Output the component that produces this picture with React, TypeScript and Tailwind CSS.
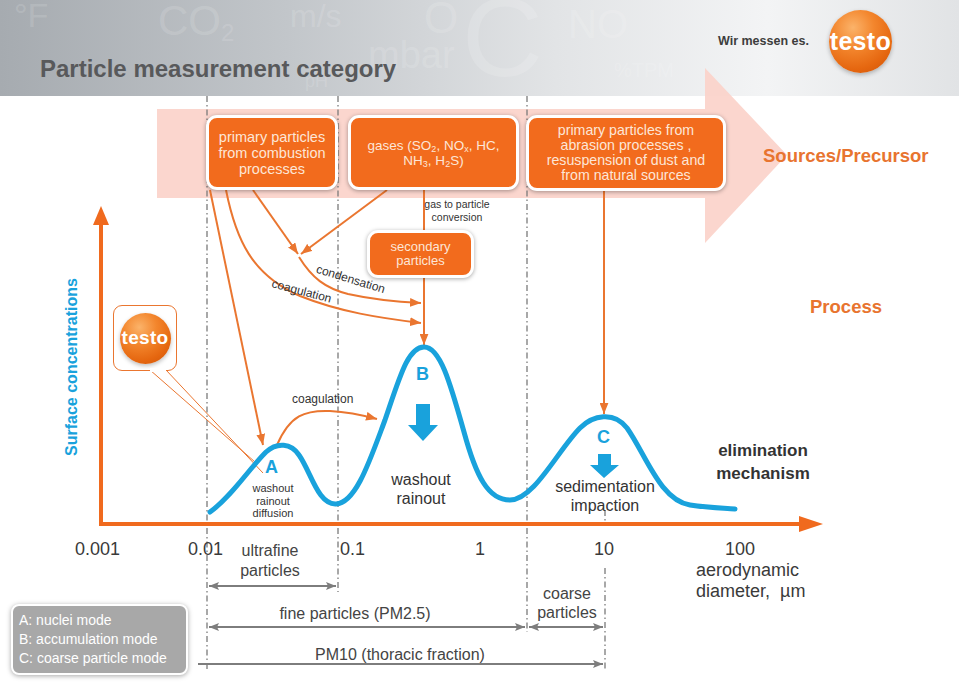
import React from 'react'

const ORANGE = '#ea7630'

// faint unit symbols behind the title bar
const ghostText = [
  { t: '°F', cls: 'left-[14px] top-[-2px] text-[34px]' },
  { t: 'm/s', cls: 'left-[290px] top-[0px] text-[32px]' },
  { t: 'O', cls: 'left-[424px] top-[-4px] text-[44px]' },
  { t: 'C', cls: 'left-[462px] top-[-18px] text-[112px]' },
  { t: 'NO', cls: 'left-[568px] top-[4px] text-[40px]' },
  { t: 'mbar', cls: 'left-[368px] top-[36px] text-[38px]' },
  { t: 'pH', cls: 'left-[305px] top-[72px] text-[18px]' },
  { t: '%TPM', cls: 'left-[614px] top-[60px] text-[20px]' },
]

function TestoBall({ size, text }: { size: string; text: string }) {
  return (
    <div
      className={`${size} flex items-center justify-center rounded-full bg-[radial-gradient(circle_at_38%_28%,#fbb36a_0%,#f3862d_35%,#e5660f_70%,#c9520a_100%)] shadow-[0_2px_4px_rgba(0,0,0,0.25)]`}
    >
      <span className={`${text} font-bold tracking-[0.3px] text-white`}>testo</span>
    </div>
  )
}

function SourceBox({ cls, children }: { cls: string; children: React.ReactNode }) {
  return (
    <div
      className={`absolute flex items-center justify-center rounded-[11px] border-[3px] border-white bg-[#f26b1d] text-center text-[#fde6d7] shadow-[0_1px_4px_rgba(0,0,0,0.35)] ${cls}`}
    >
      {children}
    </div>
  )
}

function Diagram() {
  return (
    <svg className="absolute left-0 top-0" width="959" height="687" viewBox="0 0 959 687">
      <defs>
        <marker id="oa" viewBox="0 0 10 8" refX="10" refY="4" markerWidth="11" markerHeight="9" markerUnits="userSpaceOnUse" orient="auto">
          <path d="M0,0 L10,4 L0,8 z" fill={ORANGE} />
        </marker>
        <marker id="ga" viewBox="0 0 10 8" refX="10" refY="4" markerWidth="10" markerHeight="9" markerUnits="userSpaceOnUse" orient="auto-start-reverse">
          <path d="M0,0 L10,4 L0,8 L2,4 z" fill="#7d7d7d" />
        </marker>
      </defs>

      {/* sources band */}
      <path d="M157,109 L705,109 L705,68 L787,155 L705,243 L705,198 L157,198 z" fill="#fbd2ca" opacity="0.92" />

      {/* dash-dot size boundaries */}
      <g stroke="#7a7a7a" strokeWidth="1.3" strokeDasharray="6 3 1.5 3" fill="none">
        <line x1="207" y1="96" x2="207" y2="670" />
        <line x1="338" y1="96" x2="338" y2="592" />
        <line x1="527" y1="96" x2="527" y2="632" />
        <line x1="605" y1="568" x2="605" y2="670" />
        <line x1="605" y1="510" x2="605" y2="524" />
      </g>

      {/* axes */}
      <line x1="101" y1="526" x2="101" y2="220" stroke="#f06a1e" strokeWidth="4" />
      <polygon points="101,206 93,225 109,225" fill="#f06a1e" />
      <line x1="99" y1="524" x2="802" y2="524" stroke="#f06a1e" strokeWidth="4" />
      <polygon points="823,524 799,516 799,532" fill="#f06a1e" />

      {/* process arrows */}
      <g stroke={ORANGE} strokeWidth="2" fill="none">
        <path d="M210,190 L263,445" markerEnd="url(#oa)" />
        <path d="M226,190 C236,240 252,275 300,296 C340,312 380,318 421,323" markerEnd="url(#oa)" />
        <path d="M253,190 L298,254" markerEnd="url(#oa)" />
        <path d="M387,190 L301,254" markerEnd="url(#oa)" />
        <path d="M299,257 C312,278 325,288 348,294 C375,300 400,302 421,303" markerEnd="url(#oa)" />
        <path d="M424,190 L424,231" />
        <path d="M424,277 L424,345" markerEnd="url(#oa)" />
        <path d="M604,191 L604,414" markerEnd="url(#oa)" />
        <path d="M277,445 C290,415 305,410 330,411 C348,412 362,415 377,419" markerEnd="url(#oa)" />
      </g>

      {/* callout tail */}
      <g stroke={ORANGE} strokeWidth="1" fill="none">
        <line x1="150" y1="370" x2="255" y2="462" />
        <line x1="166" y1="370" x2="263" y2="473" />
      </g>

      {/* size distribution */}
      <path
        d="M210,512 C232,496 248,470 266,452 C277,442 291,443 299,455 C311,472 318,505 336,504 C356,503 370,460 385,420 C400,376 408,347 424,347 C440,347 450,382 464,432 C476,476 488,500 510,500 C534,500 558,450 580,428 C593,415 614,411 627,428 C646,455 660,500 690,505 C710,508 724,508 735,509"
        stroke="#19a2dc"
        strokeWidth="5"
        fill="none"
        strokeLinecap="round"
      />
      <polygon points="416,404 430,404 430,425 438,425 423,441 408,425 416,425" fill="#19a2dc" />
      <polygon points="598,454 611,454 611,465 619,465 604,478 590,465 598,465" fill="#19a2dc" />

      {/* size class arrows */}
      <g stroke="#7d7d7d" strokeWidth="2" fill="none">
        <line x1="209" y1="586" x2="336" y2="586" markerStart="url(#ga)" markerEnd="url(#ga)" />
        <line x1="209" y1="627" x2="525" y2="627" markerStart="url(#ga)" markerEnd="url(#ga)" />
        <line x1="529" y1="627" x2="603" y2="627" markerStart="url(#ga)" markerEnd="url(#ga)" />
        <line x1="198" y1="664" x2="603" y2="664" markerEnd="url(#ga)" />
      </g>
    </svg>
  )
}

export default function App() {
  return (
    <div className="relative h-[687px] w-[959px] overflow-hidden bg-white font-['Liberation_Sans',Arial,sans-serif] text-[#3c3c3c]">
      <header className="relative h-[96px] overflow-hidden bg-[linear-gradient(90deg,#a6abb0_0%,#c2c6ca_30%,#e2e4e6_58%,#f3f4f5_80%,#e1e3e5_100%)]">
        {ghostText.map((g) => (
          <span key={g.t} className={`absolute leading-none text-white/15 ${g.cls}`}>
            {g.t}
          </span>
        ))}
        <span className="absolute left-[158px] top-[0px] text-[42px] leading-none text-white/15">
          CO<sub className="text-[24px]">2</sub>
        </span>
        <h1 className="absolute left-[40px] top-[51px] text-[24px] font-bold text-[#58595b]">
          Particle measurement category
        </h1>
      </header>

      <Diagram />

      {/* brand */}
      <div className="absolute left-[718px] top-[10px] flex items-center gap-[20px]">
        <span className="text-[12.5px] font-bold text-[#3d3d3d]">Wir messen es.</span>
        <TestoBall size="h-[63px] w-[63px]" text="text-[25px]" />
      </div>

      <SourceBox cls="left-[206px] top-[115px] h-[75px] w-[132px] text-[14.5px] leading-[16px]">
        primary particles
        <br />
        from combustion
        <br />
        processes
      </SourceBox>
      <SourceBox cls="left-[348px] top-[115px] h-[75px] w-[171px] text-[13.5px] leading-[15px]">
        <span>
          gases (SO<sub className="text-[9px]">2</sub>, NO<sub className="text-[9px]">x</sub>, HC,
          <br />
          NH<sub className="text-[9px]">3</sub>, H<sub className="text-[9px]">2</sub>S)
        </span>
      </SourceBox>
      <SourceBox cls="left-[526px] top-[115px] h-[76px] w-[200px] text-[14.2px] leading-[15px]">
        primary particles from
        <br />
        abrasion processes ,
        <br />
        resuspension of dust and
        <br />
        from natural sources
      </SourceBox>
      <SourceBox cls="left-[367px] top-[230px] h-[48px] w-[107px] text-[13px] leading-[14px]">
        secondary
        <br />
        particles
      </SourceBox>

      <div className="absolute left-[420px] top-[198px] w-[74px] text-center text-[10.5px] leading-[13px] text-[#333]">
        gas to particle
        <br />
        conversion
      </div>

      <div className="absolute left-[763px] top-[142px] text-[18.5px] font-bold text-[#e8742f]">
        Sources/Precursor
      </div>
      <div className="absolute left-[810px] top-[293px] text-[18.5px] font-bold text-[#e8742f]">Process</div>

      <div className="absolute left-[315px] top-[270px] rotate-[17deg] text-[12px] text-[#333]">condensation</div>
      <div className="absolute left-[271px] top-[282px] rotate-[15deg] text-[12px] text-[#333]">coagulation</div>
      <div className="absolute left-[292px] top-[390px] text-[12px] text-[#333]">coagulation</div>

      {/* callout */}
      <div className="absolute left-[113px] top-[305px] flex h-[66px] w-[64px] items-center justify-center rounded-[9px] border border-[#ea7630] bg-white">
        <TestoBall size="h-[51px] w-[51px]" text="text-[19px]" />
      </div>
      <div className="absolute left-[150px] top-[368px] h-[4px] w-[16px] bg-white" />

      <div className="absolute left-[-28px] top-[355px] w-[200px] -rotate-90 text-center text-[16px] font-bold text-[#19a2dc]">
        Surface concentrations
      </div>

      {/* modes */}
      <div className="absolute left-[265px] top-[454px] text-[18px] font-bold text-[#19a2dc]">A</div>
      <div className="absolute left-[416px] top-[361px] text-[18px] font-bold text-[#19a2dc]">B</div>
      <div className="absolute left-[597px] top-[424px] text-[18px] font-bold text-[#19a2dc]">C</div>

      <div className="absolute left-[243px] top-[482px] w-[60px] text-center text-[11px] leading-[12.5px] text-[#333]">
        washout
        <br />
        rainout
        <br />
        diffusion
      </div>
      <div className="absolute left-[376px] top-[470px] w-[90px] text-center text-[16px] leading-[19px] text-[#333]">
        washout
        <br />
        rainout
      </div>
      <div className="absolute left-[540px] top-[477px] w-[130px] text-center text-[16px] leading-[19px] text-[#333]">
        sedimentation
        <br />
        impaction
      </div>
      <div className="absolute left-[698px] top-[439px] w-[130px] text-center text-[17px] font-bold leading-[23px] text-[#333]">
        elimination
        <br />
        mechanism
      </div>

      {/* diameter scale */}
      <div className="absolute left-[75px] top-[536px] text-[18px] text-[#3a3a3a]">0.001</div>
      <div className="absolute left-[188px] top-[536px] text-[18px] text-[#3a3a3a]">0.01</div>
      <div className="absolute left-[340px] top-[536px] text-[18px] text-[#3a3a3a]">0.1</div>
      <div className="absolute left-[475px] top-[536px] text-[18px] text-[#3a3a3a]">1</div>
      <div className="absolute left-[594px] top-[536px] text-[18px] text-[#3a3a3a]">10</div>
      <div className="absolute left-[725px] top-[536px] text-[18px] text-[#3a3a3a]">100</div>
      <div className="absolute left-[696px] top-[560px] text-[18px] leading-[21px] text-[#3a3a3a]">
        aerodynamic
        <br />
        diameter,&nbsp; µm
      </div>

      <div className="absolute left-[224px] top-[541px] w-[92px] text-center text-[16px] leading-[20px] text-[#444]">
        ultrafine
        <br />
        particles
      </div>
      <div className="absolute left-[255px] top-[602px] w-[200px] text-center text-[16px] text-[#444]">
        fine particles (PM2.5)
      </div>
      <div className="absolute left-[527px] top-[584px] w-[80px] text-center text-[16px] leading-[19px] text-[#444]">
        coarse
        <br />
        particles
      </div>
      <div className="absolute left-[270px] top-[643px] w-[260px] text-center text-[16px] text-[#444]">
        PM10 (thoracic fraction)
      </div>

      {/* legend */}
      <div className="absolute left-[11px] top-[604px] flex h-[71px] w-[177px] flex-col justify-center gap-[2px] rounded-[8px] border-2 border-white bg-[#a8a8a8] px-[6px] text-[14px] leading-[17px] text-white shadow-[0_1px_5px_rgba(0,0,0,0.35)]">
        <span>A: nuclei mode</span>
        <span>B: accumulation mode</span>
        <span>C: coarse particle mode</span>
      </div>
    </div>
  )
}
